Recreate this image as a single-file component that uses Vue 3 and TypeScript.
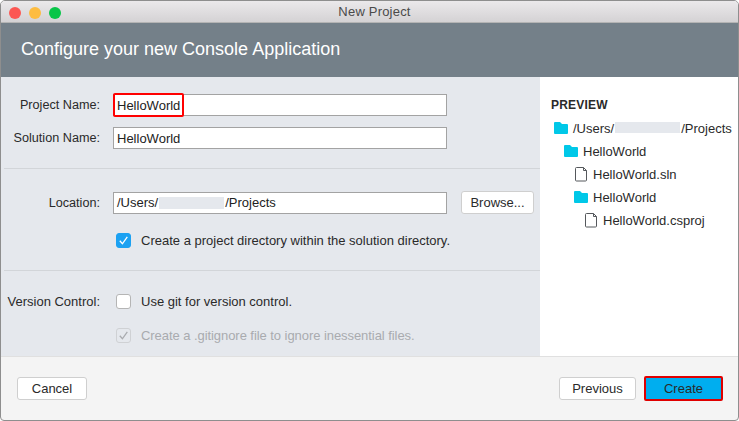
<template>
  <div class="window">
    <div class="titlebar">
      <div class="lights">
        <span class="light red"></span>
        <span class="light yellow"></span>
        <span class="light green"></span>
      </div>
      <span class="title">New Project</span>
    </div>
    <div class="banner">Configure your new Console Application</div>
    <div class="body">
      <div class="form">
        <section class="group names">
          <div class="row">
            <label class="label">Project Name:</label>
            <div class="input">HelloWorld<span class="highlight"></span></div>
          </div>
          <div class="row">
            <label class="label">Solution Name:</label>
            <div class="input">HelloWorld</div>
          </div>
        </section>
        <section class="group location">
          <div class="row">
            <label class="label">Location:</label>
            <div class="input">/Users/<span class="redacted input-redact"></span>/Projects</div>
            <button class="btn browse">Browse...</button>
          </div>
          <div class="check-row">
            <span class="check on">
              <svg viewBox="0 0 15 15" width="15" height="15"><path d="M3.8 7.8l2.6 3 4.9-7" fill="none" stroke="#fff" stroke-width="1.3" /></svg>
            </span>
            <span>Create a project directory within the solution directory.</span>
          </div>
        </section>
        <section class="group vcs">
          <div class="check-row first">
            <label class="label vcs-label">Version Control:</label>
            <span class="check"></span>
            <span>Use git for version control.</span>
          </div>
          <div class="check-row disabled">
            <span class="check off">
              <svg viewBox="0 0 15 15" width="15" height="15"><path d="M3.8 7.8l2.6 3 4.9-7" fill="none" stroke="#a9abaf" stroke-width="1.3" /></svg>
            </span>
            <span>Create a .gitignore file to ignore inessential files.</span>
          </div>
        </section>
      </div>
      <aside class="preview">
        <h4>PREVIEW</h4>
        <div v-for="item in tree" :key="item.depth" class="node" :style="{ paddingLeft: item.depth * 10 + 'px' }">
          <svg v-if="item.folder" class="icon" viewBox="0 0 15 15" width="15" height="15"><path d="M0 2a1 1 0 0 1 1-1h5l2 2h5a1 1 0 0 1 1 1v8a1 1 0 0 1-1 1h-12a1 1 0 0 1-1-1z" fill="#00c8e8" /></svg>
          <svg v-else class="icon" viewBox="0 0 15 15" width="15" height="15"><path d="M2.5 0.5h7l3 3v9.5a1 1 0 0 1-1 1h-9a1 1 0 0 1-1-1v-11.500a1 1 0 0 1 1-1z M9.500 0.500v3h3" fill="#fff" stroke="#55585c" stroke-width="1" /></svg>
          <span v-if="item.redact">/Users/<span class="redacted tree-redact"></span>/Projects</span>
          <span v-else>{{ item.name }}</span>
        </div>
      </aside>
    </div>
    <div class="footer">
      <button class="btn">Cancel</button>
      <div class="actions">
        <button class="btn previous">Previous</button>
        <button class="btn create">Create</button>
      </div>
    </div>
  </div>
</template>

<script setup lang="ts">
const tree: Array<{ name: string; depth: number; folder: boolean; redact?: boolean }> = [
  { name: '/Users//Projects', depth: 0, folder: true, redact: true },
  { name: 'HelloWorld', depth: 1, folder: true },
  { name: 'HelloWorld.sln', depth: 2, folder: false },
  { name: 'HelloWorld', depth: 2, folder: true },
  { name: 'HelloWorld.csproj', depth: 3, folder: false },
]
</script>

<style scoped>
.window {
  width: 739px;
  height: 421px;
  box-sizing: border-box;
  display: flex;
  flex-direction: column;
  border: 1px solid #8e8e8e;
  border-radius: 5px 5px 4px 4px;
  overflow: hidden;
  background: #f4f4f4;
  font-family: "Liberation Sans", Arial, sans-serif;
  font-size: 13px;
  color: #2a2a2a;
}

.titlebar {
  height: 21px;
  flex: none;
  display: flex;
  align-items: center;
  justify-content: center;
  position: relative;
  background: linear-gradient(180deg, #ebe9eb, #d4d2d4);
  border-bottom: 1px solid #b4b4b4;
  color: #4a4a4a;
}

.title {
  margin-left: 10px;
  letter-spacing: 0.2px;
}

.lights {
  position: absolute;
  left: 8px;
  top: 6px;
  display: flex;
  gap: 8px;
}

.light {
  width: 12px;
  height: 12px;
  border-radius: 50%;
}

.red { background: #fc5753; }
.yellow { background: #fdbc40; }
.green { background: #08c548; }

.banner {
  height: 54px;
  flex: none;
  box-sizing: border-box;
  padding: 0 0 2px 20px;
  display: flex;
  align-items: center;
  background: #748089;
  color: #fff;
  font-size: 18px;
}

.body {
  height: 279px;
  flex: none;
  display: flex;
}

.form {
  width: 539px;
  flex: none;
  background: #e5e8ed;
}

.group {
  margin-left: 3px;
  padding-right: 6px;
  box-sizing: border-box;
  border-bottom: 1px solid #d2d5d9;
}

.names {
  height: 92px;
  padding-top: 17px;
  display: flex;
  flex-direction: column;
  gap: 11px;
}

.location {
  height: 102px;
  padding-top: 22px;
}

.vcs {
  border-bottom: 0;
  padding-top: 23px;
}

.row {
  display: flex;
  align-items: center;
}

.label {
  width: 96px;
  flex: none;
  margin-right: 13px;
  text-align: right;
  font-size: 12.65px;
}

.input {
  width: 334px;
  height: 22px;
  box-sizing: border-box;
  flex: none;
  position: relative;
  display: flex;
  align-items: center;
  padding-left: 3px;
  background: #fff;
  border: 1px solid #a3a3a3;
  color: #222;
}

.highlight {
  position: absolute;
  left: -1px;
  top: -2px;
  width: 71px;
  height: 24px;
  box-sizing: border-box;
  border: 2px solid #f00;
  border-radius: 2px;
}

.redacted {
  display: inline-block;
  background: #e5e8ed;
}

.input-redact {
  width: 65px;
  height: 12px;
  margin: 0 1px;
}

.btn {
  height: 23px;
  box-sizing: border-box;
  padding: 0;
  background: #fff;
  border: 1px solid #cfcfcf;
  border-radius: 3px;
  font: inherit;
  color: #2a2a2a;
}

.browse {
  width: 73px;
  margin-left: 14px;
}

.check-row {
  display: flex;
  align-items: center;
  gap: 10px;
  margin-left: 112px;
  margin-top: 19px;
}

.check-row.first {
  margin-left: 0;
  margin-top: 0;
}

.vcs-label {
  margin-right: 6px;
  font-size: 13px;
  white-space: nowrap;
}

.check-row.disabled {
  color: #a9abaf;
  letter-spacing: -0.06px;
}

.check {
  width: 15px;
  height: 15px;
  flex: none;
  box-sizing: border-box;
  position: relative;
  background: #fff;
  border: 1px solid #b5b5b5;
  border-radius: 3px;
}

.check svg {
  position: absolute;
  left: -1px;
  top: -1px;
}

.check.on {
  background: #1ba1f2;
  border-color: #1ba1f2;
}

.check.off {
  background: #e5e8ed;
  border-color: #cfd1d4;
}

.preview {
  flex: 1;
  background: #fff;
  padding: 21px 0 0 11px;
}

.preview h4 {
  margin: 0 0 5px;
  font-size: 12px;
  font-weight: 700;
  letter-spacing: 0.2px;
}

.node {
  height: 23px;
  display: flex;
  align-items: center;
  gap: 4px;
  white-space: nowrap;
}

.icon {
  flex: none;
  margin-left: 3px;
}

.tree-redact {
  width: 65px;
  height: 11px;
  margin: 0 1px;
}

.footer {
  flex: 1;
  display: flex;
  align-items: center;
  justify-content: space-between;
  padding: 0 15px 0 16px;
  border-top: 1px solid #e0e0e0;
}

.footer .btn {
  width: 70px;
}

.actions {
  display: flex;
  align-items: center;
  gap: 8px;
}

.footer .previous {
  width: 77px;
}

.footer .create {
  width: 79px;
  height: 25px;
  background: #00aeef;
  border: 2px solid #e00000;
  border-radius: 2px;
}
</style>

<style>
html, body {
  margin: 0;
  background: #fff;
}
</style>
